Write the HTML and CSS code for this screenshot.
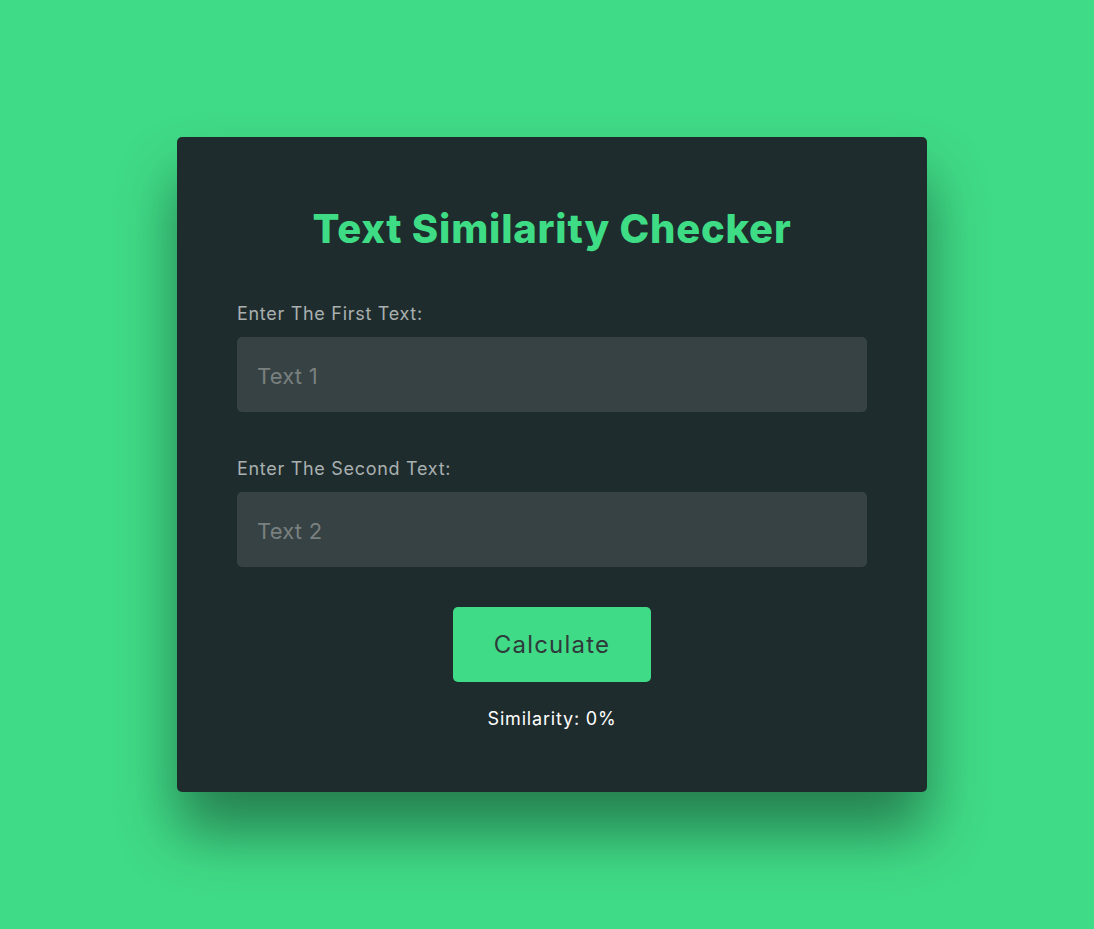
FILE: index.html
```html
<!DOCTYPE html>
<html>
<head>
<meta charset="utf-8">
<link rel="stylesheet" href="styles.css">
</head>
<body>
<div class="page">
  <div class="card">
    <h1 class="title">Text Similarity Checker</h1>
    <label class="label">Enter The First Text:</label>
    <input class="field" type="text" placeholder="Text 1">
    <label class="label label-second">Enter The Second Text:</label>
    <input class="field" type="text" placeholder="Text 2">
    <div class="actions">
      <button class="btn">Calculate</button>
    </div>
    <p class="result">Similarity: 0%</p>
  </div>
</div>
</body>
</html>
```

FILE: styles.css
```css
* { box-sizing: border-box; }
html, body {
  margin: 0;
  height: 100%;
}
body {
  background: #40db87;
  font-family: "Inter", "Open Sans", sans-serif;
}
.page {
  height: 100%;
  display: flex;
  align-items: center;
  justify-content: center;
  padding-left: 10px;
}
.card {
  width: 750px;
  background: #1f2c2d;
  border-radius: 5px;
  padding: 60px;
  box-shadow: 0 40px 60px rgba(0, 0, 0, 0.42);
  display: flex;
  flex-direction: column;
}
.title {
  margin: 0 0 39px;
  height: 64px;
  line-height: 64px;
  text-align: center;
  color: #3fdc86;
  font-size: 40px;
  font-weight: 800;
  letter-spacing: 0.78px;
}
.label {
  display: block;
  height: 27px;
  line-height: 27px;
  font-size: 18px;
  letter-spacing: 0.7px;
  color: #a9b0b0;
  margin-bottom: 10px;
}
.label-second {
  margin-top: 43px;
}
.field {
  display: block;
  width: 100%;
  height: 75px;
  border: none;
  border-radius: 5px;
  background: #364244;
  padding: 2px 20px 0;
  font-family: inherit;
  font-size: 22px;
  letter-spacing: 0.2px;
  color: #d0d4d4;
  outline: none;
}
.field::placeholder {
  color: #79807f;
}
.actions {
  margin-top: 40px;
  display: flex;
  justify-content: center;
}
.btn {
  width: 198px;
  height: 75px;
  border: none;
  border-radius: 5px;
  background: #40db87;
  color: #2f3a3a;
  font-family: inherit;
  font-size: 24px;
  letter-spacing: 1.2px;
}
.result {
  margin: 23px 0 0;
  height: 27px;
  line-height: 27px;
  text-align: center;
  color: #ffffff;
  font-size: 18px;
  letter-spacing: 0.8px;
}
```
